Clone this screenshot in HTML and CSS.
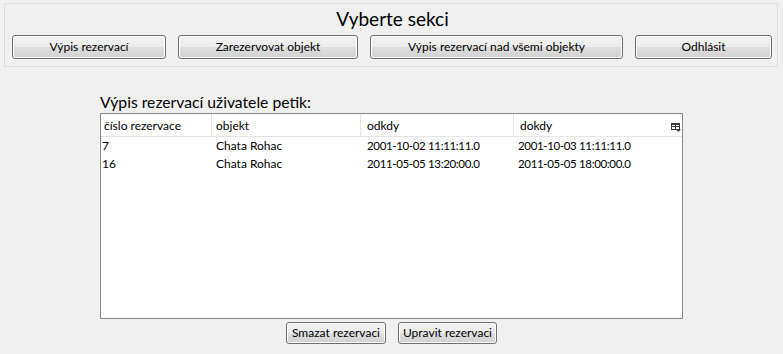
FILE: index.html
```html
<!DOCTYPE html>
<html lang="cs">
<head>
<meta charset="utf-8">
<title>Rezervace</title>
<link rel="stylesheet" href="styles.css">
</head>
<body>
<div class="panel">
  <div class="title">Vyberte sekci</div>
  <div class="nav">
    <button class="btn nav-1">Výpis rezervací</button>
    <button class="btn nav-2">Zarezervovat objekt</button>
    <button class="btn nav-3">Výpis rezervací nad všemi objekty</button>
    <button class="btn nav-4">Odhlásit</button>
  </div>
</div>
<div class="content">
  <div class="label">Výpis rezervací uživatele petik:</div>
  <div class="list">
    <div class="row head">
      <div class="cell c1">číslo rezervace</div>
      <div class="cell c2">objekt</div>
      <div class="cell c3">odkdy</div>
      <div class="cell c4">dokdy
        <svg class="corner" width="10" height="9" viewBox="0 0 10 9">
          <rect x="0.5" y="0.5" width="8" height="6" fill="none" stroke="#3a3a3a"/>
          <line x1="0" y1="1.5" x2="9" y2="1.5" stroke="#3a3a3a"/>
          <line x1="4.5" y1="1" x2="4.5" y2="7" stroke="#3a3a3a"/>
          <line x1="0" y1="3.5" x2="9" y2="3.5" stroke="#3a3a3a"/>
          <path d="M5 6.5h5l-2.5 2.5z" fill="#3a3a3a"/>
        </svg>
      </div>
    </div>
    <div class="row data">
      <div class="cell c1">7</div>
      <div class="cell c2">Chata Rohac</div>
      <div class="cell c3 date">2001-10-02 11:11:11.0</div>
      <div class="cell c4 date">2001-10-03 11:11:11.0</div>
    </div>
    <div class="row data">
      <div class="cell c1">16</div>
      <div class="cell c2">Chata Rohac</div>
      <div class="cell c3 date">2011-05-05 13:20:00.0</div>
      <div class="cell c4 date">2011-05-05 18:00:00.0</div>
    </div>
  </div>
  <div class="actions">
    <button class="btn small act-1">Smazat rezervaci</button>
    <button class="btn small act-2">Upravit rezervaci</button>
  </div>
</div>
</body>
</html>
```
FILE: styles.css
```css
html, body {
  margin: 0;
  padding: 0;
  background: #f0f0f0;
  font-family: "Lato", "Segoe UI", sans-serif;
  color: #000;
}

.panel {
  margin: 3px 5px 0 4px;
  border: 1px solid #dcdcdc;
  padding: 3px 4px 7px 7px;
  box-sizing: border-box;
}

.title {
  text-align: center;
  font-size: 19px;
  line-height: 24px;
  color: #000;
}

.nav {
  display: flex;
  gap: 12px;
  margin-top: 4px;
}

.btn {
  font-family: "Lato", "Segoe UI", sans-serif;
  font-size: 12px;
  color: #000;
  height: 24px;
  padding: 0;
  border: 1px solid #707070;
  border-radius: 3px;
  background: linear-gradient(#f3f3f3 0%, #ececec 48%, #dedede 52%, #d2d2d2 100%);
  box-shadow: inset 0 0 0 1px #fbfbfb;
  box-sizing: border-box;
  line-height: 20px;
}

.nav-1 { width: 154px; }
.nav-2 { width: 180px; }
.nav-3 { width: 253px; }
.nav-4 { width: 137px; }

.content {
  margin-left: 100px;
  width: 583px;
}

.label {
  margin-top: 26px;
  font-size: 15.7px;
  line-height: 18px;
}

.list {
  margin-top: 2px;
  height: 206px;
  box-sizing: border-box;
  border: 1px solid #828790;
  background: #fff;
}

.row {
  display: grid;
  grid-template-columns: 111px 149px 153px 1fr;
  font-size: 12px;
}

.head {
  height: 23px;
  box-sizing: border-box;
  border-bottom: 1px solid #e5e5e5;
  line-height: 16px;
}

.head .cell {
  padding-top: 4px;
}

.head .c1,
.head .c2,
.head .c3 {
  border-right: 1px solid #e5e5e5;
}

.head .c1 { padding-left: 3px; }
.head .c2 { padding-left: 4px; }
.head .c3 { padding-left: 6px; }
.head .c4 {
  padding-left: 6px;
  padding-right: 1px;
  display: flex;
  justify-content: space-between;
  align-items: flex-start;
}

.corner {
  margin-top: 5px;
}

.data {
  height: 18px;
  line-height: 18px;
}

.data .c1 { padding-left: 1px; }
.data .c2 { padding-left: 4px; }
.data .c3 { padding-left: 6px; }
.data .c4 { padding-left: 4px; }

.date {
  font-size: 11.5px;
  letter-spacing: -0.35px;
}

.actions {
  display: flex;
  justify-content: center;
  gap: 12px;
  margin-top: 3px;
}

.small {
  height: 22px;
  line-height: 18px;
}

.act-1 { width: 100px; }
.act-2 { width: 99px; }
```
